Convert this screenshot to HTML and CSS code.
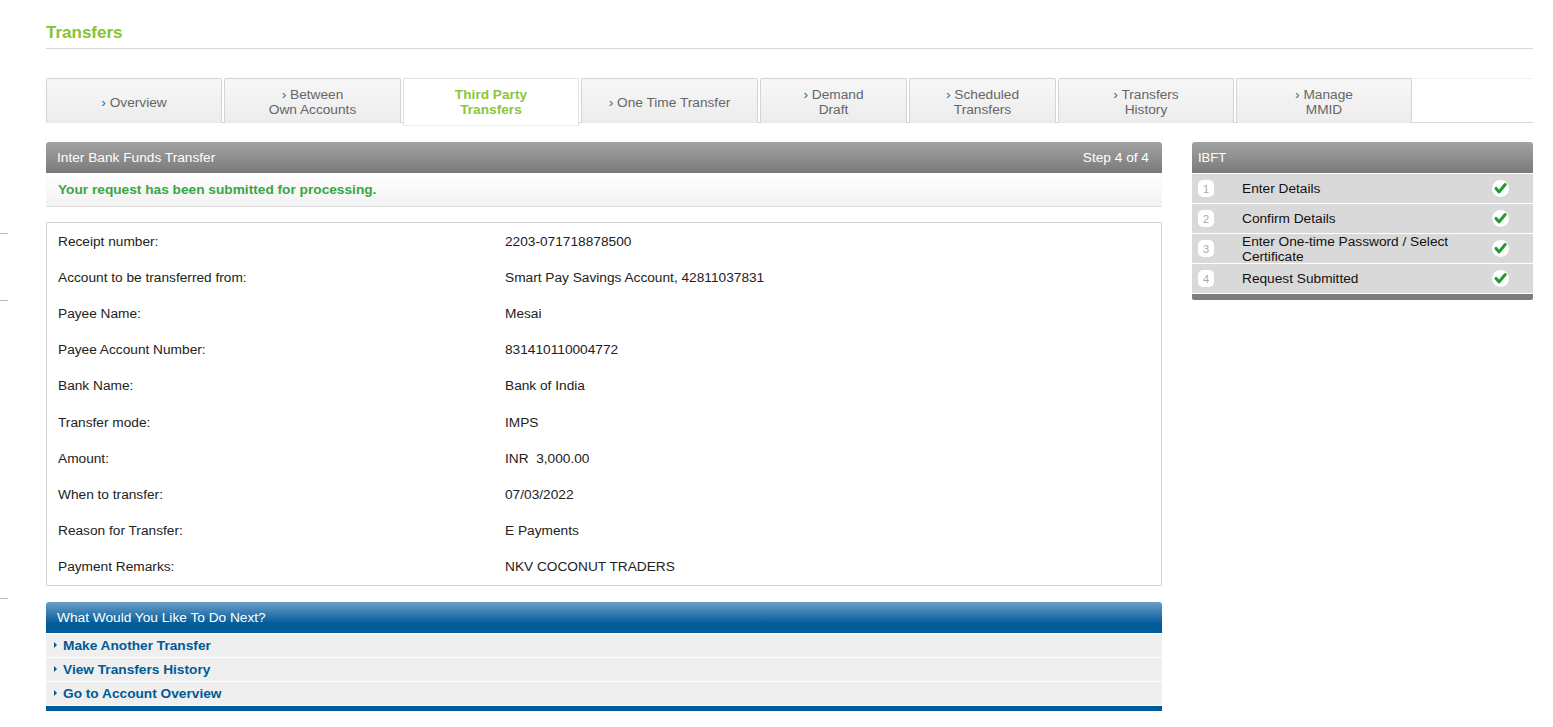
FILE: index.html
```html
<!DOCTYPE html>
<html>
<head>
<meta charset="utf-8">
<link rel="stylesheet" href="styles.css">
</head>
<body>
<div class="page">
  <div class="gutter">
    <span class="mark m1"></span>
    <span class="mark m2"></span>
    <span class="mark m3"></span>
  </div>
  <div class="main">
    <h1 class="title">Transfers</h1>
    <div class="tabs">
      <div class="tab w176"><span><i class="chev">›</i> Overview</span></div>
      <div class="tab w177"><span><i class="chev">›</i> Between<br>Own Accounts</span></div>
      <div class="tab w176 active"><span>Third Party<br>Transfers</span></div>
      <div class="tab w177"><span><i class="chev">›</i> One Time Transfer</span></div>
      <div class="tab w147"><span><i class="chev">›</i> Demand<br>Draft</span></div>
      <div class="tab w147"><span><i class="chev">›</i> Scheduled<br>Transfers</span></div>
      <div class="tab w176"><span><i class="chev">›</i> Transfers<br>History</span></div>
      <div class="tab w176"><span><i class="chev">›</i> Manage<br>MMID</span></div>
      <div class="tab-fill"></div>
    </div>
    <div class="columns">
      <div class="left">
        <div class="panel-head grey">
          <span>Inter Bank Funds Transfer</span>
          <span>Step 4 of 4</span>
        </div>
        <div class="success">Your request has been submitted for processing.</div>
        <div class="details">
          <div class="row"><span class="lbl">Receipt number:</span><span class="val">2203-071718878500</span></div>
          <div class="row"><span class="lbl">Account to be transferred from:</span><span class="val">Smart Pay Savings Account, 42811037831</span></div>
          <div class="row"><span class="lbl">Payee Name:</span><span class="val">Mesai</span></div>
          <div class="row"><span class="lbl">Payee Account Number:</span><span class="val">831410110004772</span></div>
          <div class="row"><span class="lbl">Bank Name:</span><span class="val">Bank of India</span></div>
          <div class="row"><span class="lbl">Transfer mode:</span><span class="val">IMPS</span></div>
          <div class="row"><span class="lbl">Amount:</span><span class="val">INR&nbsp; 3,000.00</span></div>
          <div class="row"><span class="lbl">When to transfer:</span><span class="val">07/03/2022</span></div>
          <div class="row"><span class="lbl">Reason for Transfer:</span><span class="val">E Payments</span></div>
          <div class="row"><span class="lbl">Payment Remarks:</span><span class="val">NKV COCONUT TRADERS</span></div>
        </div>
        <div class="next">
          <div class="panel-head blue"><span>What Would You Like To Do Next?</span></div>
          <div class="next-row"><span class="tri"></span><span class="link">Make Another Transfer</span></div>
          <div class="next-row"><span class="tri"></span><span class="link">View Transfers History</span></div>
          <div class="next-row"><span class="tri"></span><span class="link">Go to Account Overview</span></div>
          <div class="next-foot"></div>
        </div>
      </div>
      <div class="right">
        <div class="panel-head grey side"><span>IBFT</span></div>
        <div class="step"><span class="num">1</span><span class="stxt">Enter Details</span><span class="check"><svg width="17" height="17" viewBox="0 0 16 16"><circle cx="8" cy="8" r="8" fill="#fff"/><path d="M3.8 7.9 L6.7 11.2 L12.4 4.2" fill="none" stroke="#1e9a2e" stroke-width="2.8" stroke-linecap="round" stroke-linejoin="round"/></svg></span></div>
        <div class="step"><span class="num">2</span><span class="stxt">Confirm Details</span><span class="check"><svg width="17" height="17" viewBox="0 0 16 16"><circle cx="8" cy="8" r="8" fill="#fff"/><path d="M3.8 7.9 L6.7 11.2 L12.4 4.2" fill="none" stroke="#1e9a2e" stroke-width="2.8" stroke-linecap="round" stroke-linejoin="round"/></svg></span></div>
        <div class="step"><span class="num">3</span><span class="stxt">Enter One-time Password / Select Certificate</span><span class="check"><svg width="17" height="17" viewBox="0 0 16 16"><circle cx="8" cy="8" r="8" fill="#fff"/><path d="M3.8 7.9 L6.7 11.2 L12.4 4.2" fill="none" stroke="#1e9a2e" stroke-width="2.8" stroke-linecap="round" stroke-linejoin="round"/></svg></span></div>
        <div class="step"><span class="num">4</span><span class="stxt">Request Submitted</span><span class="check"><svg width="17" height="17" viewBox="0 0 16 16"><circle cx="8" cy="8" r="8" fill="#fff"/><path d="M3.8 7.9 L6.7 11.2 L12.4 4.2" fill="none" stroke="#1e9a2e" stroke-width="2.8" stroke-linecap="round" stroke-linejoin="round"/></svg></span></div>
        <div class="side-foot"></div>
      </div>
    </div>
  </div>
</div>
</body>
</html>
```
FILE: styles.css
```css
* { box-sizing: border-box; }
html, body { margin: 0; padding: 0; background: #fff; }
body { font-family: "Liberation Sans", Arial, sans-serif; font-size: 13.7px; color: #222; }

.page { display: flex; width: 1553px; }
.gutter { width: 46px; display: flex; flex-direction: column; padding-top: 233px; }
.mark { display: block; width: 8px; height: 1px; background: #b8b8b8; }
.m2 { margin-top: 66px; }
.m3 { margin-top: 297px; }

.main { width: 1487px; display: flex; flex-direction: column; }

.title {
  margin: 0;
  padding-top: 23px;
  height: 49px;
  font-size: 17px;
  font-weight: bold;
  color: #86c232;
  line-height: 20px;
  border-bottom: 1px solid #d8d8d8;
}

.tabs {
  margin-top: 29px;
  display: flex;
  gap: 2px;
  border-bottom: 1px solid #d6d6d6;
  height: 45px;
}
.tab {
  height: 45px;
  border: 1px solid #d4d4d4;
  border-bottom: none;
  border-radius: 2px 2px 0 0;
  background: linear-gradient(#f7f7f7, #ececec);
  display: flex;
  align-items: center;
  justify-content: center;
  text-align: center;
  color: #666;
  font-size: 13.7px;
  line-height: 15px;
  padding-top: 2px;
  flex: none;
}
.w176 { width: 176px; }
.w177 { width: 177px; }
.w147 { width: 147px; }
.chev { font-style: normal; color: #2a6da6; }
.tab.active {
  background: #fff;
  color: #8cc63f;
  font-weight: bold;
  height: 48px;
  border-color: #e2e2e2;
  border-bottom: 1px solid #eeeeee;
  position: relative;
  z-index: 1;
  padding-top: 1px;
  padding-bottom: 1px;
}
.tab-fill { flex: 1; border-top: 1px solid #f2f2f2; margin-left: -2px; }

.columns { display: flex; gap: 30px; margin-top: 19px; align-items: flex-start; }
.left { width: 1116px; flex: none; }
.right { width: 341px; flex: none; }

.panel-head {
  height: 31px;
  display: flex;
  justify-content: space-between;
  align-items: center;
  padding: 0 13px 0 11px;
  color: #fff;
  font-size: 13.7px;
  border-radius: 3px 3px 0 0;
}
.panel-head.grey { background: linear-gradient(#a3a3a3, #7a7a7a); }
.panel-head.blue { background: linear-gradient(#6a9fc7 0%, #2f77ae 40%, #005b99 70%, #005b99 100%); }
.panel-head.side { padding-left: 6px; font-size: 13px; }

.success {
  height: 34px;
  display: flex;
  align-items: center;
  padding-left: 12px;
  font-size: 13.7px;
  font-weight: bold;
  color: #3aa544;
  background: linear-gradient(#ffffff, #f2f2f2);
  border-bottom: 1px solid #dcdcdc;
}

.details {
  margin-top: 15px;
  border: 1px solid #d4d4d4;
  width: 1116px;
}
.row {
  height: 36.2px;
  display: flex;
  align-items: center;
  font-size: 13.7px;
  color: #222;
}
.lbl { width: 458px; padding-left: 11px; }
.val { flex: 1; }

.next { margin-top: 16px; }
.next-row {
  height: 24px;
  border-top: 1px solid #fff;
  background: #efefef;
  display: flex;
  align-items: center;
  padding-left: 8px;
}
.tri {
  width: 0; height: 0;
  border-top: 3px solid transparent;
  border-bottom: 3px solid transparent;
  border-left: 3px solid #005b96;
  margin-right: 6px;
}
.link { color: #005a96; font-weight: bold; font-size: 13.7px; }
.next-foot { height: 6px; border-top: 1px solid #fff; background: #005b99; }

.step {
  height: 30px;
  border-top: 1px solid #fff;
  background: #d9d9d9;
  display: flex;
  align-items: center;
  padding-left: 6px;
}
.step:first-of-type { border-top: 2px solid #fff; }
.num {
  width: 16px; height: 17px;
  background: #fff;
  border-radius: 5px;
  color: #aaa;
  font-size: 11px;
  display: flex;
  align-items: center;
  justify-content: center;
  flex: none;
}
.stxt { width: 250px; margin-left: 28px; font-size: 13.7px; color: #111; line-height: 15px; }
.check { display: flex; }
.side-foot { height: 7px; border-top: 1px solid #fff; background: #7d7d7d; border-radius: 0 0 2px 2px; }
```
